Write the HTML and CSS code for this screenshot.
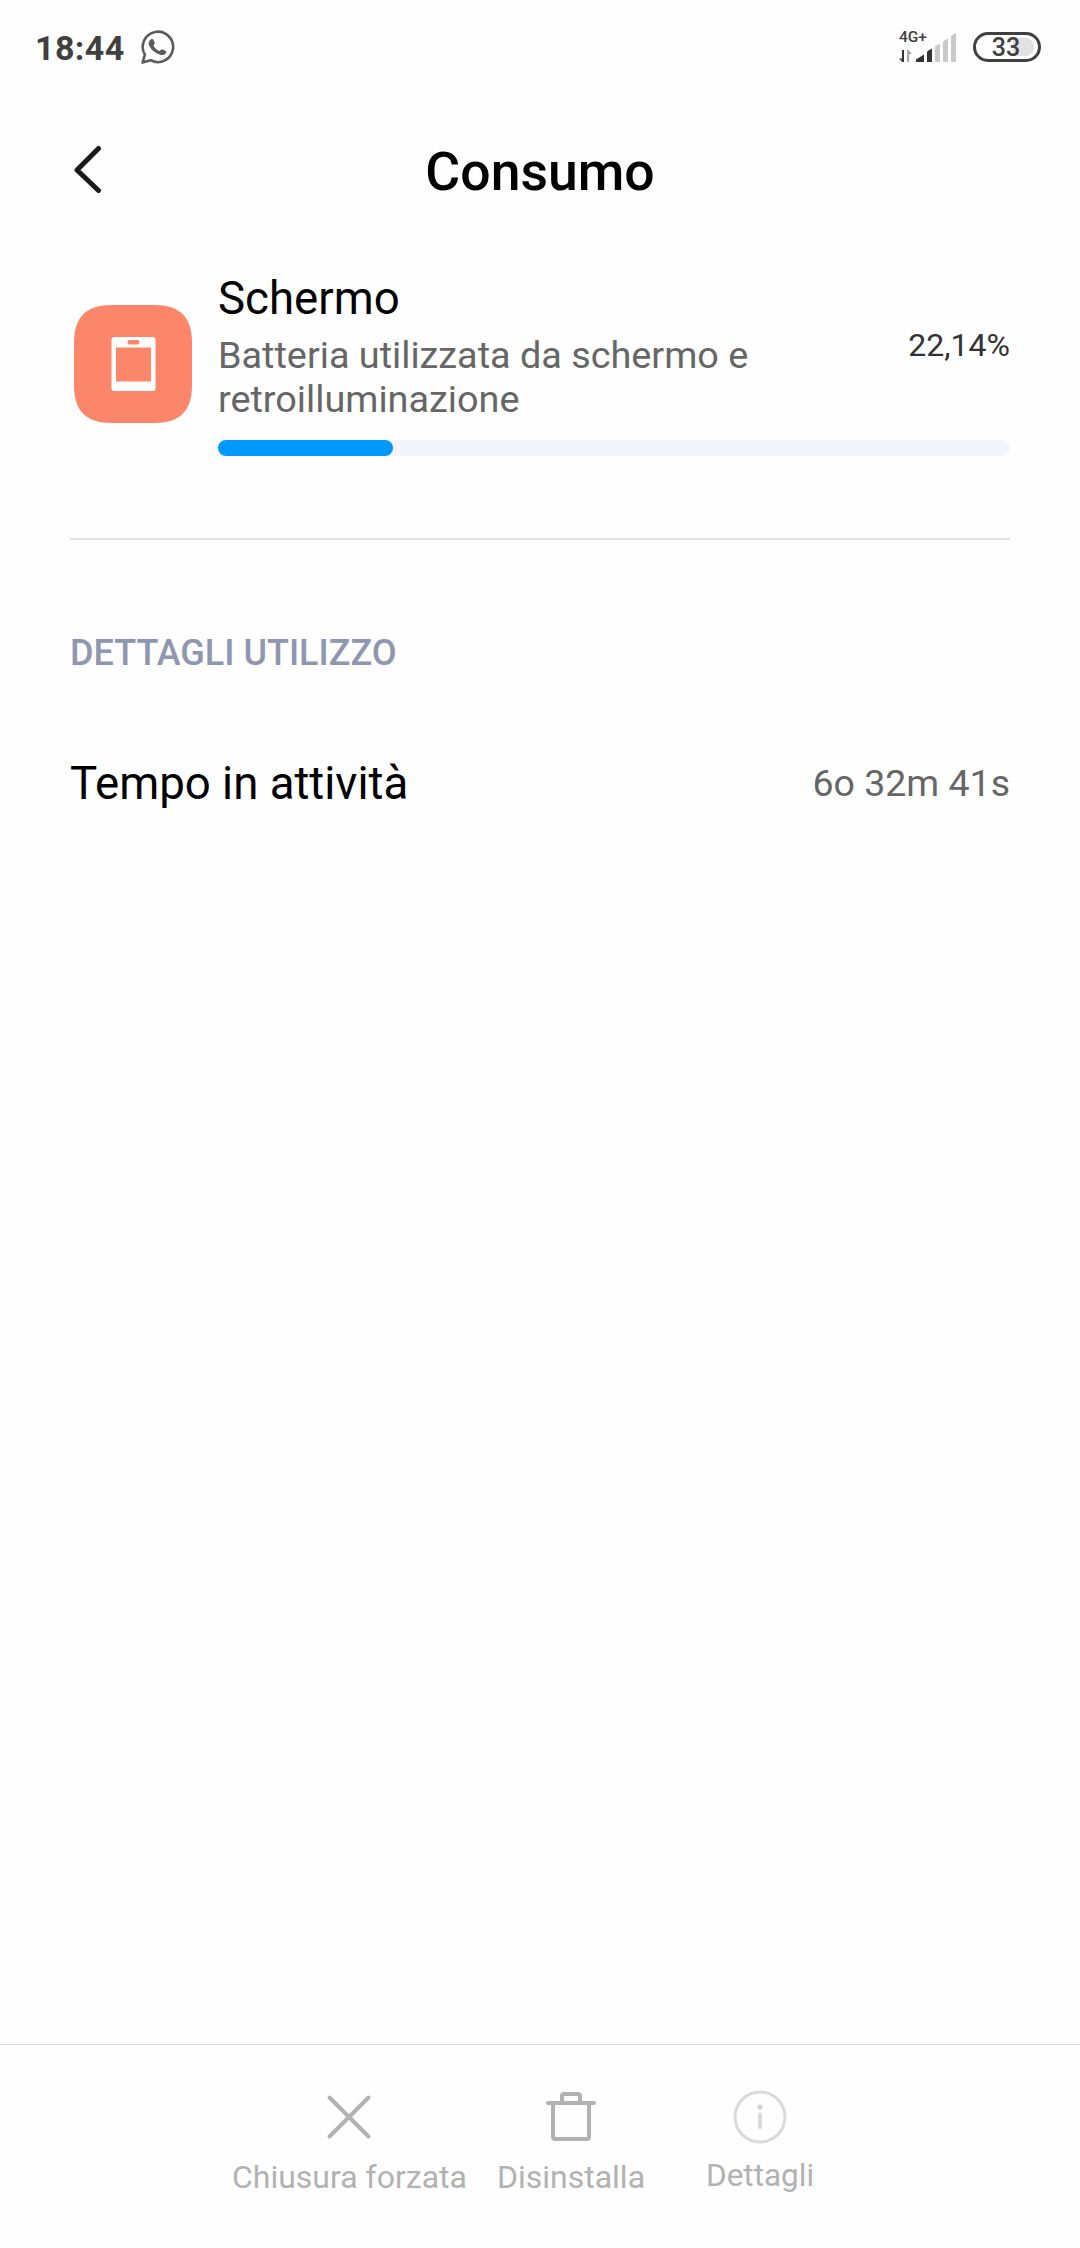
FILE: index.html
```html
<!DOCTYPE html>
<html lang="it">
<head>
    <meta charset="UTF-8">
    <meta name="viewport" content="width=device-width, initial-scale=1.0">
    <title>Consumo</title>
    <link rel="stylesheet" href="styles.css">
</head>
<body>
    <div class="status-bar">
        <span class="time">18:44</span>
        <svg class="whatsapp" width="34" height="34" viewBox="0 0 34 34">
            <path d="M1.600 32.600 3.900 24.700A15.200 15.200 0 1 1 9.600 30.200Z" fill="none" stroke="#5c5c5c" stroke-width="2.600" stroke-linejoin="round"/>
            <path d="M10.200 9.200c.8-.5 1.700-.4 2.100.4l1.500 3.200c.3.700-.9 2-1.300 2.600 1.400 2.800 3.400 4.600 6.200 5.700.7-.6 1.600-2.100 2.400-1.800l3.700 1.600c.8.500.4 1.800-.2 2.600-1.300 1.600-3.600 1.900-5.500 1.300-5-1.500-8.800-4.700-11-9.300-1.100-2.400-.3-5.100 2.100-6.300z" fill="#5c5c5c"/>
        </svg>
        <div class="status-right">
            <div class="signal">
                <span class="network">4G+</span>
                <svg width="58" height="29" viewBox="0 0 58 29">
                    <path d="M5 17v12H3.400L0 25.500h3V17z" fill="#333"/>
                    <path d="M8 29V17h1.600L13 21h-2.700v8z" fill="#aaa"/>
                    <path d="M17 29v-2.500l8-5V29z" fill="#333"/>
                    <path d="M28 29v-10l1-1.200 4-2.300V29z" fill="#333"/>
                    <path d="M36 29V14l1-1.200 4-2.300V29zM44 29V9l1-1.200 4-2.300V29zM52 29V3.500l1-1.200L57 0V29z" fill="#c9c9c9"/>
                </svg>
            </div>
            <div class="battery"><span>33</span></div>
        </div>
    </div>

    <header>
        <svg class="back" width="32" height="48" viewBox="0 0 32 48">
            <path d="M28.500 3.500 7 25l21.500 20.500" fill="none" stroke="#1a1a1a" stroke-width="5" stroke-linecap="round" stroke-linejoin="round"/>
        </svg>
        <h1>Consumo</h1>
    </header>

    <main>
        <section class="usage">
            <svg class="app-icon" width="118" height="118" viewBox="0 0 118 118">
                <path d="M0 59V38C0 12 12 0 38 0h42c26 0 38 12 38 38v42c0 26-12 38-38 38H38C12 118 0 106 0 80z" fill="#fb8669"/>
                <path d="M40 32h39q2.500 0 2.500 2.500v49q0 2.500-2.500 2.500H40q-2.500 0-2.500-2.500v-49Q37.500 32 40 32z" fill="#fff"/>
                <rect x="42" y="42.500" width="35" height="34" fill="#fb8669"/>
                <rect x="53.500" y="35" width="12" height="4.500" rx="2" fill="#fb8669"/>
            </svg>
            <div class="usage-body">
                <div class="usage-info">
                    <div>
                        <h2>Schermo</h2>
                        <p>Batteria utilizzata da schermo e retroilluminazione</p>
                    </div>
                    <span class="percent">22,14%</span>
                </div>
                <div class="progress"><div class="progress-fill" style="width: 22.14%"></div></div>
            </div>
        </section>

        <section class="details">
            <h3>DETTAGLI UTILIZZO</h3>
            <div class="detail-row">
                <span>Tempo in attività</span>
                <span class="value">6o 32m 41s</span>
            </div>
        </section>
    </main>

    <footer>
        <div class="action">
            <svg width="54" height="54" viewBox="0 0 54 54">
                <path d="M7.500 7.500l39 39M46.500 7.500l-39 39" fill="none" stroke="#b2b2b2" stroke-width="4" stroke-linecap="round"/>
            </svg>
            <span>Chiusura forzata</span>
        </div>
        <div class="action">
            <svg width="54" height="54" viewBox="0 0 54 54">
                <g fill="none" stroke="#b2b2b2" stroke-width="4" stroke-linecap="round" stroke-linejoin="round">
                    <path d="M4 13h46M9 13v34q0 2 2 2h32q2 0 2-2V13M18 12V6q0-2 2-2h14q2 0 2 2v6"/>
                </g>
            </svg>
            <span>Disinstalla</span>
        </div>
        <div class="action info">
            <svg width="54" height="54" viewBox="0 0 54 54">
                <circle cx="27" cy="27" r="25" fill="none" stroke="#dadada" stroke-width="3"/>
                <circle cx="27" cy="17" r="2.600" fill="#d2d2d2"/>
                <path d="M27 24.500v13" stroke="#dadada" stroke-width="4" stroke-linecap="round"/>
            </svg>
            <span>Dettagli</span>
        </div>
    </footer>
</body>
</html>
```
FILE: styles.css
```css
* {
    box-sizing: border-box;
}
body {
    display: flex;
    flex-direction: column;
    height: 2248px;
    margin: 0;
    background-color: #fefefe;
    color: #000;
    font-family: Roboto, "Liberation Sans", sans-serif;
}
h1, h2, h3, p {
    margin: 0;
    font-weight: 400;
}
svg {
    display: block;
    flex: none;
}

/* status bar */
.status-bar {
    display: flex;
    align-items: center;
    height: 96px;
    padding: 0 39px 0 35px;
}
.time {
    width: 90px;
    color: #404040;
    font-size: 34px;
    font-weight: 700;
    letter-spacing: 0.4px;
}
.whatsapp {
    margin: -2px 0 0 16px;
}
.status-right {
    display: flex;
    align-items: center;
    gap: 16px;
    margin: -2px 0 0 auto;
}
.signal {
    position: relative;
}
.network {
    position: absolute;
    top: -4px;
    left: 0;
    color: #404040;
    font-size: 15.5px;
    font-weight: 500;
    line-height: 16px;
}
.battery {
    width: 68px;
    height: 30px;
    padding: 3px 5px 3px 3px;
    border: 3px solid #404040;
    border-radius: 15px;
    background: linear-gradient(#e2e2e2, #e2e2e2) right 10px center / 15px 18px no-repeat,
        radial-gradient(circle 9px at 49px 12px, #e2e2e2 98%, transparent);
    color: #404040;
    font-size: 25px;
    font-weight: 500;
    line-height: 19px;
    text-align: center;
}

/* page title */
header {
    display: flex;
    align-items: center;
    height: 152px;
    padding: 0 70px;
}
h1 {
    flex: 1;
    margin: -2px 32px 0 0;
    font-size: 53.5px;
    font-weight: 500;
    text-align: center;
}
.back {
    margin-top: -6px;
}

main {
    flex: 1;
    padding: 22px 70px 0;
}
.usage {
    display: flex;
    align-items: center;
    gap: 26px;
    padding: 0 0 82px 4px;
    border-bottom: 2px solid #e2e2e2;
}
.app-icon {
    margin-top: 2px;
}
.usage-body {
    flex: 1;
}
.usage-info {
    display: flex;
    align-items: center;
    justify-content: space-between;
}
h2 {
    margin-bottom: 5px;
    font-size: 45.6px;
    line-height: 58px;
}
.usage p {
    width: 580px;
    color: #666;
    font-size: 37.8px;
    line-height: 44px;
}
.percent {
    margin-top: -2px;
    color: #333;
    font-size: 32px;
}
.progress {
    height: 16px;
    margin-top: 19px;
    border-radius: 8px;
    background-color: #f4f5fa;
}
.progress-fill {
    height: 16px;
    border-radius: 8px;
    background-color: #0099ff;
}

.details {
    padding-top: 91px;
}
h3 {
    color: #8f96b0;
    font-size: 36px;
    font-weight: 500;
    line-height: 44px;
}
.detail-row {
    display: flex;
    align-items: center;
    justify-content: space-between;
    height: 60px;
    margin-top: 78px;
    font-size: 45.6px;
}
.value {
    color: #666;
    font-size: 37.5px;
}

/* bottom actions */
footer {
    display: flex;
    justify-content: center;
    height: 204px;
    padding: 45px 3px 0 0;
    border-top: 1px solid #d9d9d9;
}
.action {
    display: flex;
    flex-direction: column;
    align-items: center;
    gap: 13px;
    padding: 0 15px;
    color: #b2b2b2;
    font-size: 32px;
    line-height: 40px;
}
.info {
    width: 200px;
    gap: 12px;
    font-size: 31.5px;
}
```
